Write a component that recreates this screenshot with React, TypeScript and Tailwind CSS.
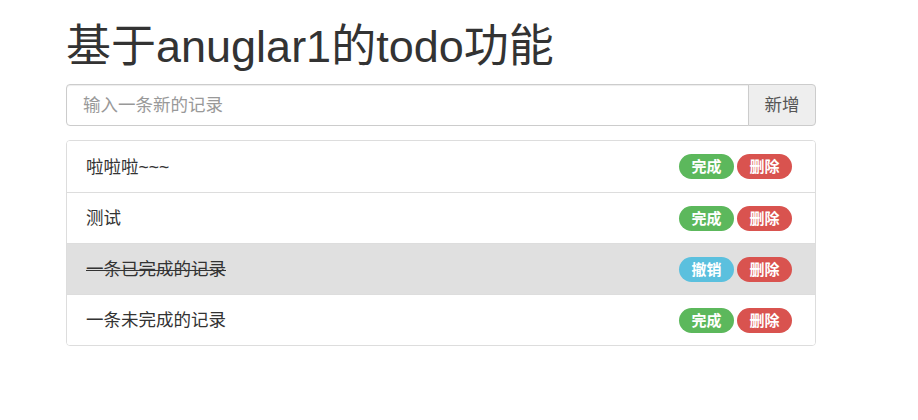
import { useState } from "react"

interface Todo {
  id: number;
  text: string;
  done: boolean;
}

const initialTodos: Todo[] = [
  { id: 1, text: "啦啦啦~~~", done: false },
  { id: 2, text: "测试", done: false },
  { id: 3, text: "一条已完成的记录", done: true },
  { id: 4, text: "一条未完成的记录", done: false },
]

const font = { fontFamily: '"Liberation Sans", "Noto Sans CJK SC", sans-serif' }

export default function App() {
  const [todos, setTodos] = useState<Todo[]>(initialTodos)
  const [draft, setDraft] = useState("")

  const add = () => {
    if (!draft.trim()) return
    setTodos([...todos, { id: Date.now(), text: draft, done: false }])
    setDraft("")
  }

  const toggle = (id: number) =>
    setTodos(todos.map((t) => (t.id === id ? { ...t, done: !t.done } : t)))

  const remove = (id: number) => setTodos(todos.filter((t) => t.id !== id))

  return (
    <div className="min-h-[420px] bg-white text-[#333]" style={font}>
      <div className="w-[750px] ml-[66px] pt-[22px]">
        <h1 className="text-[45px] leading-[49.5px] font-normal mb-[12.5px]">
          基于anuglar1的todo功能
        </h1>

        <div className="flex h-[42px]">
          <input
            value={draft}
            onChange={(e) => setDraft(e.target.value)}
            placeholder="输入一条新的记录"
            className="flex-1 border border-[#ccc] rounded-l-[4px] px-[16px] text-[17.5px] text-[#555] placeholder:text-[#999] outline-none shadow-[inset_0_1px_1px_rgba(0,0,0,0.075)]"
          />
          <button
            onClick={add}
            className="w-[68px] -ml-px border border-[#ccc] rounded-r-[4px] bg-[#eee] text-[17.5px] text-[#555]"
          >
            新增
          </button>
        </div>

        <ul className="mt-[14px] border border-[#ddd] rounded-[4px] overflow-hidden">
          {todos.map((t, i) => (
            <li
              key={t.id}
              className={
                "flex items-center justify-between h-[51px] pl-[19px] pr-[23px] text-[17.5px] " +
                (i > 0 ? "border-t border-[#ddd] " : "") +
                (t.done ? "bg-[#e0e0e0]" : "bg-white")
              }
            >
              <span className="relative block leading-[26px]">
                {t.text}
                {t.done && (
                  <span className="absolute left-0 right-0 top-[14px] h-px bg-[#333]" />
                )}
              </span>
              <span className="flex gap-[3px]">
                {t.done ? (
                  <button
                    onClick={() => toggle(t.id)}
                    className="w-[55px] h-[25px] rounded-full bg-[#5bc0de] text-white text-[15px] font-bold leading-[25px]"
                  >
                    撤销
                  </button>
                ) : (
                  <button
                    onClick={() => toggle(t.id)}
                    className="w-[55px] h-[25px] rounded-full bg-[#5cb85c] text-white text-[15px] font-bold leading-[25px]"
                  >
                    完成
                  </button>
                )}
                <button
                  onClick={() => remove(t.id)}
                  className="w-[55px] h-[25px] rounded-full bg-[#d9534f] text-white text-[15px] font-bold leading-[25px]"
                >
                  删除
                </button>
              </span>
            </li>
          ))}
        </ul>
      </div>
    </div>
  )
}
